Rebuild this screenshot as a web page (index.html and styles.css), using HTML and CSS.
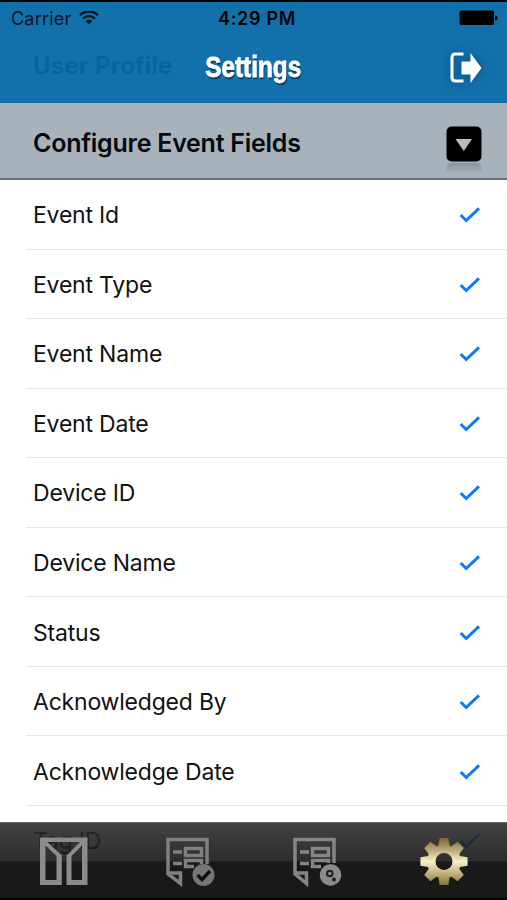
FILE: index.html
```
<!DOCTYPE html>
<html lang="en">
<head>
  <meta charset="UTF-8">
  <title>Settings</title>
  <link rel="stylesheet" href="styles.css">
</head>
<body>

  <header class="header">
    <div class="status-bar">
      <div class="carrier">
        <span>Carrier</span>
        <svg class="wifi" width="20" height="15" viewBox="0 0 20 15">
          <path d="M1 4.200a13 13 0 0 1 18 0M4.200 7.500a8.400 8.400 0 0 1 11.600 0" fill="none" stroke="#05141f" stroke-width="2.300"/>
          <path d="M10 13.500L6.700 10.200a4.700 4.700 0 0 1 6.600 0z" fill="#05141f"/>
        </svg>
      </div>
      <div class="time">4:29 PM</div>
      <svg class="battery" width="40" height="16" viewBox="0 0 40 16">
        <rect x="1.500" y="0.500" width="34.500" height="14.500" rx="2" fill="#000"/>
        <path d="M37 5.500a2.300 2.300 0 0 1 0 5z" fill="#000"/>
      </svg>
    </div>
    <div class="nav-bar">
      <span class="prev-title">User Profile</span>
      <h1>Settings</h1>
      <svg class="logout" width="36" height="36" viewBox="0 0 36 36">
        <path d="M16.500 4H8.500Q5 4 5 7.500V27.500Q5 31 8.500 31H16.500" fill="none" stroke="#fff" stroke-width="3"/>
        <path d="M14.500 11.500H23.500V3L34.500 18L23.500 33V24.500H14.500z" fill="#fff"/>
      </svg>
    </div>
  </header>

  <div class="section-header">
    <h2>Configure Event Fields</h2>
    <div class="toggle">
      <svg width="36" height="36" viewBox="0 0 36 36">
        <rect x="0.500" y="0.500" width="35" height="35" rx="5" fill="#000"/>
        <path d="M9.500 13H26L17.800 25z" fill="#b8bdbc"/>
      </svg>
      <div class="reflection"></div>
    </div>
  </div>

  <ul class="fields">
    <li><span>Event Id</span></li>
    <li><span>Event Type</span></li>
    <li><span>Event Name</span></li>
    <li><span>Event Date</span></li>
    <li><span>Device ID</span></li>
    <li><span>Device Name</span></li>
    <li><span>Status</span></li>
    <li><span>Acknowledged By</span></li>
    <li><span>Acknowledge Date</span></li>
    <li><span>Tag ID</span></li>
  </ul>

  <nav class="tab-bar">
    <div class="tab">
      <svg width="50" height="50" viewBox="0 0 50 50">
        <path fill="#8b8b8b" fill-rule="evenodd" d="M2 0.500H49.500V48H28.500V18.500L42 5H9.500L23.800 18.500V48H2zM7.500 8.500V43H18.500V19zM44 8.500L33.500 19V43H44z"/>
      </svg>
    </div>
    <div class="tab">
      <svg width="50" height="50" viewBox="0 0 50 50">
        <g fill="none" stroke="#808080" stroke-width="3.500">
          <path d="M42 27V2.500H3V37L15.500 46.500V36H3"/>
          <path d="M8 15H17M8 26.500H17M36.500 27V23.500H20.500V29.500H29"/>
          <rect x="20.500" y="11.500" width="16" height="7"/>
        </g>
        <circle cx="38.500" cy="38" r="11" fill="#767676"/>
        <path d="M32.500 38L37 42.500L45 34" fill="none" stroke="#101010" stroke-width="3.500"/>
      </svg>
    </div>
    <div class="tab">
      <svg width="50" height="50" viewBox="0 0 50 50">
        <g fill="none" stroke="#858585" stroke-width="3.500">
          <path d="M42 26V2.500H3V37L14.500 46.500V36H3"/>
          <path d="M8 15H17M8 26.500H17M36.500 26V23.500H20.500V29.500H29"/>
          <rect x="20.500" y="11.500" width="16" height="7"/>
        </g>
        <circle cx="38.500" cy="38" r="10.700" fill="#8b8b8b"/>
        <circle cx="37.800" cy="36.500" r="2.800" fill="none" stroke="#202020" stroke-width="2"/>
        <circle cx="42" cy="42.500" r="2" fill="#202020"/>
      </svg>
    </div>
    <div class="tab active">
      <svg width="50" height="50" viewBox="-25 -24.500 50 50">
        <g class="gear"></g>
      </svg>
    </div>
  </nav>

  <script>
    const check = `
      <svg class="check" width="22" height="18" viewBox="0 0 22 18">
        <path d="M1.700 9L7.200 14.500L20 2.300" fill="none" stroke="#0c7bf5" stroke-width="3"/>
      </svg>`;

    document.querySelectorAll('.fields li').forEach(function(row) {
      row.insertAdjacentHTML('beforeend', check);
    });

    // Gear outline: eight tapered teeth around a ring
    const points = [];
    for (let i = 0; i < 8; i++) {
      [[-19, 17], [-10.5, 24], [10.5, 24], [19, 17]].forEach(function(p) {
        const angle = (i * 45 + p[0] - 90) * Math.PI / 180;
        points.push((p[1] * Math.cos(angle)).toFixed(2) + ' ' + (p[1] * Math.sin(angle)).toFixed(2));
      });
    }
    document.querySelector('.gear').innerHTML = `
      <defs>
        <linearGradient id="gold" x1="0" y1="0" x2="0" y2="1">
          <stop offset="0" stop-color="#7d6030"/>
          <stop offset="0.5" stop-color="#f7f0c4"/>
          <stop offset="1" stop-color="#8a7038"/>
        </linearGradient>
      </defs>
      <path fill="url(#gold)" fill-rule="evenodd" d="M${points.join('L')}zM-8.500 0a8.500 8.500 0 1 0 17 0a8.500 8.500 0 1 0 -17 0z"/>`;
  </script>

</body>
</html>
```
FILE: styles.css
```
* {
  box-sizing: border-box;
  margin: 0;
  padding: 0;
}
body {
  position: relative;
  height: 900px;
  overflow: hidden;
  font-family: Inter, "Liberation Sans", sans-serif;
  background-color: #fff;
  color: #111;
}
svg {
  display: block;
}
.header {
  height: 103px;
  background-color: #1270ab;
  border-top: 2px solid #000;
  border-bottom: 1px solid #07629f;
}
.status-bar {
  display: grid;
  grid-template-columns: 1fr auto 1fr;
  align-items: center;
  height: 32px;
  padding: 0 9px 0 11px;
  font-size: 18px;
  color: #05141f;
}
.carrier {
  display: flex;
  align-items: center;
  gap: 8px;
  letter-spacing: 0.2px;
}
.time {
  padding-left: 5px;
  font-weight: 600;
  letter-spacing: 0.7px;
  color: #000;
}
.battery {
  justify-self: end;
}
.nav-bar {
  display: grid;
  grid-template-columns: 1fr auto 1fr;
  align-items: center;
  height: 67px;
  padding: 0 24px 0 33px;
}
.prev-title {
  padding-bottom: 4px;
  font-size: 24px;
  font-weight: 600;
  letter-spacing: 0.3px;
  color: #08639c;
}
/* Condensed heavy title */
h1 {
  margin-left: -9px;
  font-family: "Liberation Sans", sans-serif;
  font-size: 29px;
  font-weight: bold;
  color: #fff;
  -webkit-text-stroke: 0.8px #fff;
  text-shadow: 1px 2px 1px #043454;
  transform: scaleX(0.84);
}
.logout {
  justify-self: end;
  filter: drop-shadow(0 0 4px #064b7c);
}
.section-header {
  display: flex;
  justify-content: space-between;
  height: 77px;
  padding: 23px 25px 0 33px;
  background-color: #a8b2bb;
  border-bottom: 2px solid #686e74;
}
h2 {
  font-size: 25px;
  font-weight: 600;
  letter-spacing: -0.25px;
  line-height: 34px;
  color: #05090c;
}
.reflection {
  height: 12px;
  margin-top: 1px;
  border-radius: 5px 5px 0 0;
  background: linear-gradient(#8d959b, #a8b2bb 10px);
}
.fields {
  padding-left: 26px;
  list-style: none;
}
.fields li {
  display: flex;
  justify-content: space-between;
  align-items: center;
  height: 69.55px;
  padding: 2px 26px 0 7px;
  border-bottom: 1.5px solid #e6e6e8;
  font-size: 23px;
  letter-spacing: -0.2px;
}
.tab-bar {
  position: absolute;
  left: 0;
  bottom: 0;
  display: grid;
  grid-template-columns: repeat(4, 1fr);
  width: 100%;
  height: 78px;
  padding-top: 14px;
  background: linear-gradient(rgba(46, 46, 46, 0.9), rgba(22, 22, 22, 0.9) 38px, rgba(0, 0, 0, 0.9) 39px);
  border-top: 1px solid #666;
  border-bottom: 2px solid #000;
}
.tab {
  display: flex;
  justify-content: center;
}
```
